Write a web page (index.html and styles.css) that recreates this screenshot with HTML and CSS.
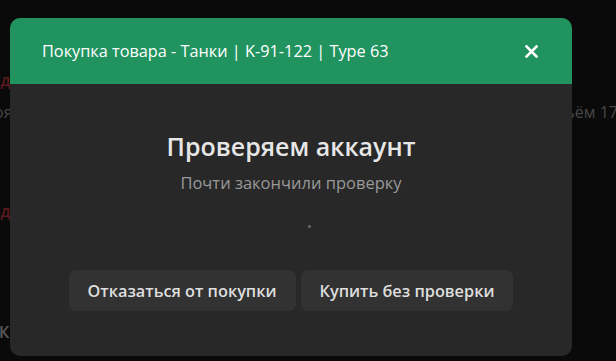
FILE: index.html
```html
<!DOCTYPE html>
<html lang="ru">
<head>
<meta charset="utf-8">
<title>Покупка товара</title>
<link rel="stylesheet" href="styles.css">
</head>
<body>
<div class="page">
  <div class="bg">
    <div class="bg-title">Модель</div>
    <div class="bg-row"><span class="bg-left">Твоя</span><span class="bg-right">Объём 17</span></div>
    <div class="bg-line">Ит</div>
    <div class="bg-title second">Модель</div>
    <div class="bg-line">Пг</div>
    <div class="bg-line last">К</div>
  </div>
  <div class="modal">
    <div class="modal-header">
      <span class="modal-title">Покупка товара - Танки | K-91-122 | Type 63</span>
      <svg class="close" width="13" height="13" viewBox="0 0 13 13" aria-hidden="true">
        <path d="M1.5 1.5 L11.5 11.5 M11.5 1.5 L1.5 11.5" stroke="#ffffff" stroke-width="2.6" stroke-linecap="square"/>
      </svg>
    </div>
    <div class="modal-body">
      <h2 class="heading">Проверяем аккаунт</h2>
      <p class="sub">Почти закончили проверку</p>
      <div class="loader"><span class="dot"></span></div>
      <div class="actions">
        <button class="btn">Отказаться от покупки</button>
        <button class="btn">Купить без проверки</button>
      </div>
    </div>
  </div>
</div>
</body>
</html>
```
FILE: styles.css
```css
html, body {
  margin: 0;
  padding: 0;
  background: #0a0a0a;
  width: 616px;
  height: 361px;
  overflow: hidden;
  font-family: "Open Sans", "Noto Sans", sans-serif;
}
.page {
  position: relative;
  width: 616px;
  height: 361px;
  overflow: hidden;
}
.bg {
  margin-left: -24px;
  padding-top: 68px;
  font-size: 16px;
  color: #474747;
}
.bg-title {
  color: #5c1a1f;
  font-weight: 600;
  height: 24px;
  line-height: 24px;
}
.bg-title.second { margin-top: 54px; }
.bg-row {
  display: flex;
  justify-content: space-between;
  width: 642px;
  line-height: 22px;
  margin-top: 9px;
}
.bg-line { line-height: 22px; }
.bg-line.last {
  margin-top: 76px;
  padding-left: 23px;
  font-weight: 600;
  color: #5a5a5a;
}
.modal {
  position: absolute;
  left: 10px;
  top: 18px;
  width: 562px;
  height: 338px;
  background: #282828;
  border-radius: 10px;
  overflow: hidden;
  display: flex;
  flex-direction: column;
}
.modal-header {
  height: 66px;
  background: #21935f;
  display: flex;
  align-items: center;
  justify-content: space-between;
  padding: 0 34px 0 32px;
  flex: none;
}
.modal-title {
  color: #ffffff;
  font-size: 16.3px;
}
.close { display: block; }
.modal-body {
  display: flex;
  flex-direction: column;
  align-items: center;
  padding-top: 45px;
}
.heading {
  margin: 0;
  font-size: 25px;
  font-weight: 600;
  color: #e6e6e6;
  line-height: 34px;
}
.sub {
  margin: 8px 0 0;
  font-size: 16.5px;
  color: #999999;
  line-height: 24px;
}
.loader {
  height: 62px;
  width: 100%;
  display: flex;
  justify-content: center;
  align-items: center;
}
.dot {
  width: 3px;
  height: 3px;
  border-radius: 50%;
  background: #6a6a6a;
  margin-left: 36px;
}
.actions {
  display: flex;
  gap: 5px;
  margin-top: 13px;
}
.btn {
  height: 41px;
  padding: 0 19px;
  border: none;
  border-radius: 7px;
  background: #323232;
  color: #dedede;
  font-family: inherit;
  font-size: 16.3px;
  font-weight: 600;
}
```
